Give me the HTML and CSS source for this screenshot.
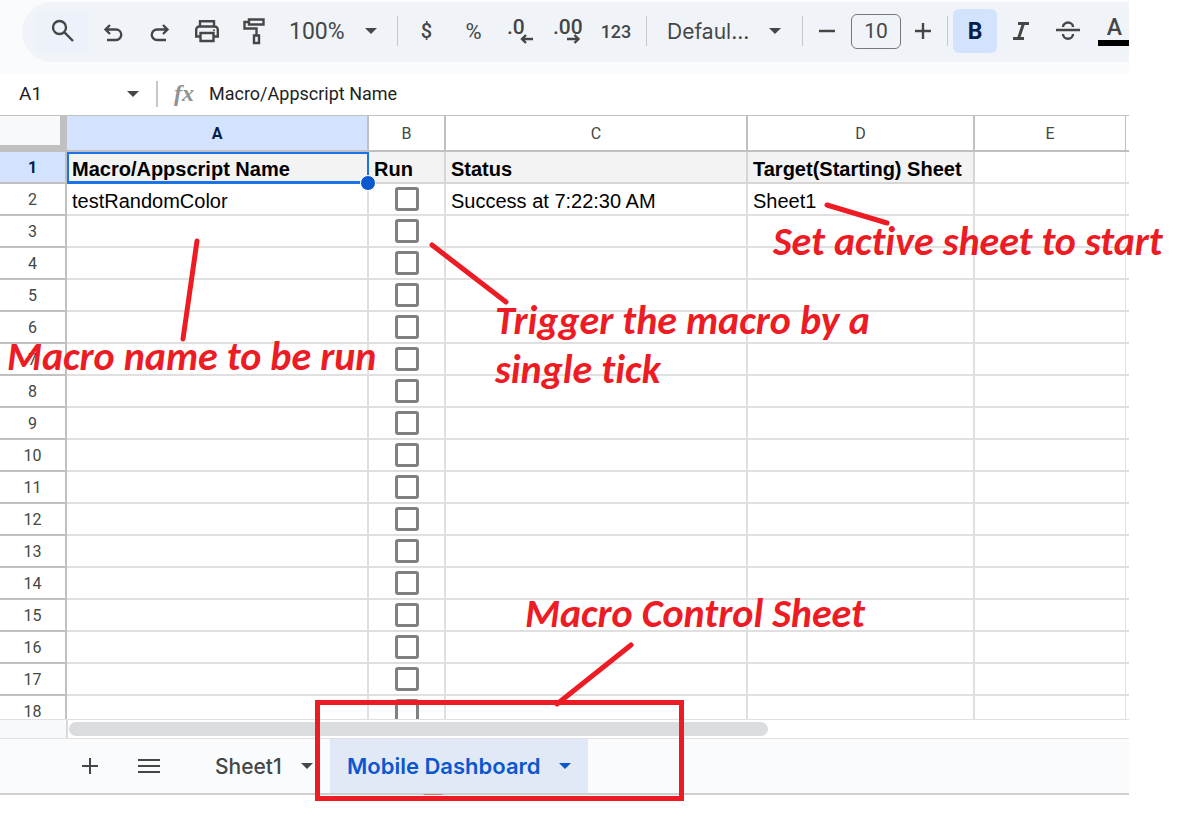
FILE: index.html
```html
<!DOCTYPE html>
<html lang="en">
<head>
<meta charset="utf-8">
<title>Mobile Dashboard</title>
<link rel="stylesheet" href="styles.css">
</head>
<body>
<main class="app">
  <header class="top">
    <div class="toolbar" role="toolbar" aria-label="Formatting">
      <button class="tool search" aria-label="Search the menus"><svg width="24" height="24" viewBox="0 0 24 24"><circle cx="8.500" cy="8.500" r="6.500"/><path d="M13.200 13.200 22 22"/></svg></button>
      <button class="tool" aria-label="Undo"><svg class="low" width="22" height="22" viewBox="0 0 22 22"><path d="M8 2 3.500 6.500 8 11M3.500 6.500H14a5.200 5.200 0 0 1 0 10.500H5"/></svg></button>
      <button class="tool" aria-label="Redo"><svg class="low" width="22" height="22" viewBox="0 0 22 22"><path d="m14 2 4.500 4.500L14 11M18.500 6.500H8a5.200 5.200 0 0 0 0 10.500h9"/></svg></button>
      <button class="tool" aria-label="Print"><svg width="26" height="24" viewBox="0 0 26 24"><path d="M6 7V2.200h14V7M6 17.500H2.200V11a3.200 3.200 0 0 1 3.200-3.500h15.200a3.200 3.200 0 0 1 3.200 3.500v6.500H20M6.500 14h13v8h-13z"/><circle class="solid" cx="20" cy="11.300" r="1"/></svg></button>
      <button class="tool" aria-label="Paint format"><svg width="24" height="28" viewBox="0 0 24 28"><path d="M7 2.500h14.500v5H7zM7 5H2.500v6.500H14.500V18M12 18.500h5V26h-5z"/></svg></button>
      <label class="pick zoom"><select aria-label="Zoom"><option>100%</option></select><svg class="caret" width="12" height="6" viewBox="0 0 12 6"><path d="M0 0h12L6 6z"/></svg></label>
      <span class="sep"></span>
      <button class="tool dollar" aria-label="Currency">$</button>
      <button class="tool percent" aria-label="Percent">%</button>
      <button class="tool" aria-label="Decrease decimal places"><svg width="28" height="28" viewBox="0 0 28 28"><text x="0" y="17">.0</text><path d="M26 22H15.500M19 18l-4 4 4 4"/></svg></button>
      <button class="tool" aria-label="Increase decimal places"><svg width="30" height="28" viewBox="0 0 30 28"><text x="0" y="17">.00</text><path d="M14 22h11M21.500 18l4 4-4 4"/></svg></button>
      <button class="tool formats" aria-label="More formats">123</button>
      <span class="sep"></span>
      <label class="pick font"><select aria-label="Font"><option>Defaul...</option></select><svg class="caret" width="12" height="6" viewBox="0 0 12 6"><path d="M0 0h12L6 6z"/></svg></label>
      <span class="sep"></span>
      <button class="tool step" aria-label="Decrease font size"><svg width="16" height="16" viewBox="0 0 16 16"><path d="M0 8h16"/></svg></button>
      <input class="size" aria-label="Font size" value="10">
      <button class="tool step" aria-label="Increase font size"><svg width="16" height="16" viewBox="0 0 16 16"><path d="M0 8h16M8 0v16"/></svg></button>
      <span class="sep"></span>
      <button class="tool bold" aria-label="Bold">B</button>
      <button class="tool italic" aria-label="Italic"><svg width="16" height="18" viewBox="0 0 16 18"><path class="thick" d="M5 1.500h11M0 16.500h11M10.500 1.500l-5 15"/></svg></button>
      <button class="tool" aria-label="Strikethrough"><svg width="24" height="20" viewBox="0 0 24 20"><path d="M0 9h24M7 6a5 4.500 0 0 1 10 0M7 13a5 4.800 0 0 0 10 0"/></svg></button>
      <button class="tool color" aria-label="Text color"><span>A</span></button>
    </div>
  </header>

  <section class="formula">
    <label class="pick name"><select aria-label="Name box"><option>A1</option></select><svg class="caret" width="12" height="6" viewBox="0 0 12 6"><path d="M0 0h12L6 6z"/></svg></label>
    <span class="rule"></span>
    <span class="fx">fx</span>
    <input class="entry" aria-label="Formula" value="Macro/Appscript Name">
  </section>

  <section class="viewport">
    <table class="grid">
      <colgroup><col class="c0"><col class="ca"><col class="cb"><col class="ca"><col class="cd"><col class="ce"><col></colgroup>
      <thead><tr><th class="corner"></th><th class="on">A</th><th>B</th><th>C</th><th>D</th><th class="thin">E</th><th class="rest"></th></tr></thead>
      <tbody>
        <tr class="titles"><th class="on">1</th><td class="active">Macro/Appscript Name</td><td>Run</td><td>Status</td><td>Target(Starting) Sheet</td><td class="thin blank"></td><td class="rest blank"></td></tr>
        <tr><th>2</th><td>testRandomColor</td><td class="tick"><input type="checkbox" aria-label="Run row 2"></td><td>Success at 7:22:30 AM</td><td>Sheet1</td><td class="thin"></td><td class="rest"></td></tr>
        <tr><th>3</th><td></td><td class="tick"><input type="checkbox" aria-label="Run row 3"></td><td></td><td></td><td class="thin"></td><td class="rest"></td></tr>
        <tr><th>4</th><td></td><td class="tick"><input type="checkbox" aria-label="Run row 4"></td><td></td><td></td><td class="thin"></td><td class="rest"></td></tr>
        <tr><th>5</th><td></td><td class="tick"><input type="checkbox" aria-label="Run row 5"></td><td></td><td></td><td class="thin"></td><td class="rest"></td></tr>
        <tr><th>6</th><td></td><td class="tick"><input type="checkbox" aria-label="Run row 6"></td><td></td><td></td><td class="thin"></td><td class="rest"></td></tr>
        <tr><th>7</th><td></td><td class="tick"><input type="checkbox" aria-label="Run row 7"></td><td></td><td></td><td class="thin"></td><td class="rest"></td></tr>
        <tr><th>8</th><td></td><td class="tick"><input type="checkbox" aria-label="Run row 8"></td><td></td><td></td><td class="thin"></td><td class="rest"></td></tr>
        <tr><th>9</th><td></td><td class="tick"><input type="checkbox" aria-label="Run row 9"></td><td></td><td></td><td class="thin"></td><td class="rest"></td></tr>
        <tr><th>10</th><td></td><td class="tick"><input type="checkbox" aria-label="Run row 10"></td><td></td><td></td><td class="thin"></td><td class="rest"></td></tr>
        <tr><th>11</th><td></td><td class="tick"><input type="checkbox" aria-label="Run row 11"></td><td></td><td></td><td class="thin"></td><td class="rest"></td></tr>
        <tr><th>12</th><td></td><td class="tick"><input type="checkbox" aria-label="Run row 12"></td><td></td><td></td><td class="thin"></td><td class="rest"></td></tr>
        <tr><th>13</th><td></td><td class="tick"><input type="checkbox" aria-label="Run row 13"></td><td></td><td></td><td class="thin"></td><td class="rest"></td></tr>
        <tr><th>14</th><td></td><td class="tick"><input type="checkbox" aria-label="Run row 14"></td><td></td><td></td><td class="thin"></td><td class="rest"></td></tr>
        <tr><th>15</th><td></td><td class="tick"><input type="checkbox" aria-label="Run row 15"></td><td></td><td></td><td class="thin"></td><td class="rest"></td></tr>
        <tr><th>16</th><td></td><td class="tick"><input type="checkbox" aria-label="Run row 16"></td><td></td><td></td><td class="thin"></td><td class="rest"></td></tr>
        <tr><th>17</th><td></td><td class="tick"><input type="checkbox" aria-label="Run row 17"></td><td></td><td></td><td class="thin"></td><td class="rest"></td></tr>
        <tr><th>18</th><td></td><td class="tick"><input type="checkbox" aria-label="Run row 18"></td><td></td><td></td><td class="thin"></td><td class="rest"></td></tr>
      </tbody>
    </table>
  </section>

  <div class="scroll"><span class="stub"></span><span class="track"><span class="thumb"></span></span></div>

  <nav class="tabs" aria-label="Sheets">
    <button class="tabtool" aria-label="Add sheet"><svg width="16" height="16" viewBox="0 0 16 16"><path d="M0 8h16M8 0v16"/></svg></button>
    <button class="tabtool" aria-label="All sheets"><svg width="22" height="16" viewBox="0 0 22 16"><path d="M0 2h22M0 8h22M0 14h22"/></svg></button>
    <button class="tab">Sheet1<svg class="caret" width="12" height="6" viewBox="0 0 12 6"><path d="M0 0h12L6 6z"/></svg></button>
    <button class="tab current">Mobile Dashboard<svg class="caret" width="12" height="6" viewBox="0 0 12 6"><path d="M0 0h12L6 6z"/></svg></button>
  </nav>
</main>

<div class="notes">
  <svg class="lines" width="1202" height="817" viewBox="0 0 1202 817">
    <path d="M827 205 887 223M432 245 506 302M197 241 183 339M631 645 557 704"/>
    <rect x="317.500" y="702.500" width="364" height="96"/>
    <path class="glow" d="M424 794.500h18"/>
  </svg>
  <p class="note n-active">Set active sheet to start</p>
  <p class="note n-trigger">Trigger the macro by a<br>single tick</p>
  <p class="note n-name">Macro name to be run</p>
  <p class="note n-control">Macro Control Sheet</p>
</div>
</body>
</html>
```

FILE: styles.css
```css
* { box-sizing: border-box; }

body {
  margin: 0;
  height: 100vh;
  position: relative;
  overflow: hidden;
  background: #fff;
  font-family: Roboto, "Liberation Sans", sans-serif;
  color: #444746;
}

button, select, input { font: inherit; color: inherit; margin: 0; padding: 0; border: 0; background: none; }

.app {
  height: calc(100vh - 22px);
  margin-right: 73px;
  display: flex;
  flex-direction: column;
  overflow: hidden;
}

svg { fill: none; stroke: #444746; stroke-width: 2; flex: none; }
.caret { fill: #444746; stroke: none; }
.solid { fill: #444746; stroke: none; }

/* Toolbar */
.top { flex: none; background: #f9fbfd; padding: 2px 0 12px 22px; }
.toolbar {
  display: flex;
  align-items: center;
  height: 60px;
  padding: 0 0 2px 14px;
  background: #f0f4f9;
  border-radius: 30px 0 0 30px;
  overflow: hidden;
}
.tool {
  flex: none;
  width: 47px;
  height: 44px;
  display: flex;
  align-items: center;
  justify-content: center;
  font-weight: 500;
}
.tool svg { stroke-width: 2.4; overflow: visible; }
.tool text { fill: #444746; stroke: none; font-size: 21px; font-weight: 500; }
.search { width: 53px; height: 42px; background: #edf1fa; }
.low { margin-top: 6px; }
.tool .thick { stroke-width: 3; }
.dollar { font-size: 20px; }
.percent { font-size: 22px; font-weight: 400; }
.formats { width: 50px; font-size: 18px; }
.sep { flex: none; width: 1px; height: 30px; margin: 0 5px; background: #c7c7c7; }

.pick { flex: none; display: grid; align-items: center; }
.pick select { grid-area: 1 / 1; width: 100%; appearance: none; outline: 0; }
.pick .caret { grid-area: 1 / 1; justify-self: end; pointer-events: none; }
.zoom { width: 88px; margin: 0 15px 0 12px; font-size: 23px; }
.font { width: 114px; margin: 0 16px 0 15px; font-size: 21px; font-family: Inter, Roboto, sans-serif; }
.step { width: 38px; }
.size {
  flex: none;
  width: 50px;
  height: 35px;
  margin: 0 3px 0 5px;
  border: 1px solid #747775;
  border-radius: 6px;
  text-align: center;
  font-size: 21px;
}
.bold { width: 44px; background: #d3e3fd; border-radius: 6px; color: #041e49; font-size: 23px; font-weight: 700; }
.color { font-size: 23px; }
.color span { width: 34px; border-bottom: 6px solid #000; line-height: 24px; }

/* Formula bar */
.formula {
  flex: none;
  display: flex;
  align-items: center;
  height: 42px;
  padding: 0 0 2px 19px;
  border-bottom: 1px solid #c0c0c0;
  color: #1f1f1f;
  font-size: 18px;
}
.name { width: 120px; font-size: 19px; }
.rule { width: 2px; height: 26px; margin: 0 16px 0 17px; background: #c7c7c7; }
.fx { width: 35px; font: italic 700 24px "Liberation Serif", serif; color: #8f9192; }
.entry { flex: 1; min-width: 0; }

/* Grid */
.viewport { flex: 1; min-height: 0; overflow: hidden; }
.grid { width: 100%; table-layout: fixed; border-spacing: 0; color: #000; font: 20px "Liberation Sans", Arial, sans-serif; }
.c0 { width: 67px; }
.ca { width: 302px; }
.cb { width: 77px; }
.cd { width: 227px; }
.ce { width: 151px; }
.grid th {
  height: 32px;
  padding: 0;
  border: solid #c0c0c0;
  border-width: 0 2px 2px 0;
  font: 400 16px Roboto, sans-serif;
  color: #444746;
}
.grid thead th { height: 36px; }
.grid th.on { background: #d3e3fd; color: #041e49; font-weight: 700; }
.grid th.corner { background: #f8f9fa; border-width: 0 7px 7px 0; }
.grid td {
  height: 32px;
  padding: 3px 0 0 5px;
  border: solid #e0e0e0;
  border-width: 0 2px 2px 0;
  line-height: 24px;
  white-space: nowrap;
}
.grid .thin { border-right-width: 1px; }
.grid .rest { border-right-width: 0; }
.titles td { background: #f3f3f3; border-color: #d6d6d6; font-weight: 700; }
.titles td.blank { background: #fff; border-color: #e0e0e0; }
.grid td.tick { padding: 0; }
.tick input {
  display: block;
  appearance: none;
  width: 24px;
  height: 24px;
  margin: 0 auto;
  border: 3px solid #808080;
  border-radius: 3px;
}
.active { position: relative; }
.active::before { content: ""; position: absolute; inset: 0 -2px -2px 0; border: 2px solid #1a73e8; border-bottom-width: 3px; }
.active::after {
  content: "";
  position: absolute;
  right: -9px;
  bottom: -9px;
  width: 14px;
  height: 14px;
  border: 1px solid #fff;
  border-radius: 50%;
  background: #0b57d0;
}

/* Scrollbar */
.scroll { flex: none; display: flex; height: 20px; border: solid #e0e0e0; border-width: 1px 0; }
.stub { width: 68px; background: #f8f9fa; border-right: 2px solid #d9d9d9; }
.track { flex: 1; padding: 2px 1px; }
.thumb { display: block; width: 66%; height: 14px; border-radius: 7px; background: #dadce0; }

/* Sheet tabs */
.tabs {
  flex: none;
  display: flex;
  height: 56px;
  padding-left: 60px;
  background: #f9fbfd;
  border-bottom: 2px solid #cfcfcf;
}
.tabtool { width: 59px; display: flex; align-items: center; justify-content: center; }
.tab {
  display: flex;
  align-items: center;
  justify-content: space-between;
  width: 152px;
  padding: 0 17px 0 37px;
  font: 500 21px Inter, Roboto, sans-serif;
}
.current { width: 258px; padding: 0 17px; background: #e1e9f7; color: #0b57d0; font-size: 22px; font-weight: 600; }
.current .caret { fill: #0b57d0; }

/* Callouts drawn over the sheet */
.notes { position: absolute; inset: 0; pointer-events: none; }
.lines { display: block; stroke: #ed1c24; stroke-width: 5; stroke-linecap: round; }
.glow { stroke: #e0795f; stroke-width: 1; }
.note {
  position: absolute;
  margin: 0;
  color: #ed1c24;
  font: italic 700 40px/49px Carlito, Lato, sans-serif;
  font-variant-ligatures: none;
  white-space: nowrap;
}
.n-active { left: 773px; top: 217px; }
.n-trigger { left: 495px; top: 296px; }
.n-name { left: 7px; top: 332px; }
.n-control { left: 525px; top: 589px; }
```
